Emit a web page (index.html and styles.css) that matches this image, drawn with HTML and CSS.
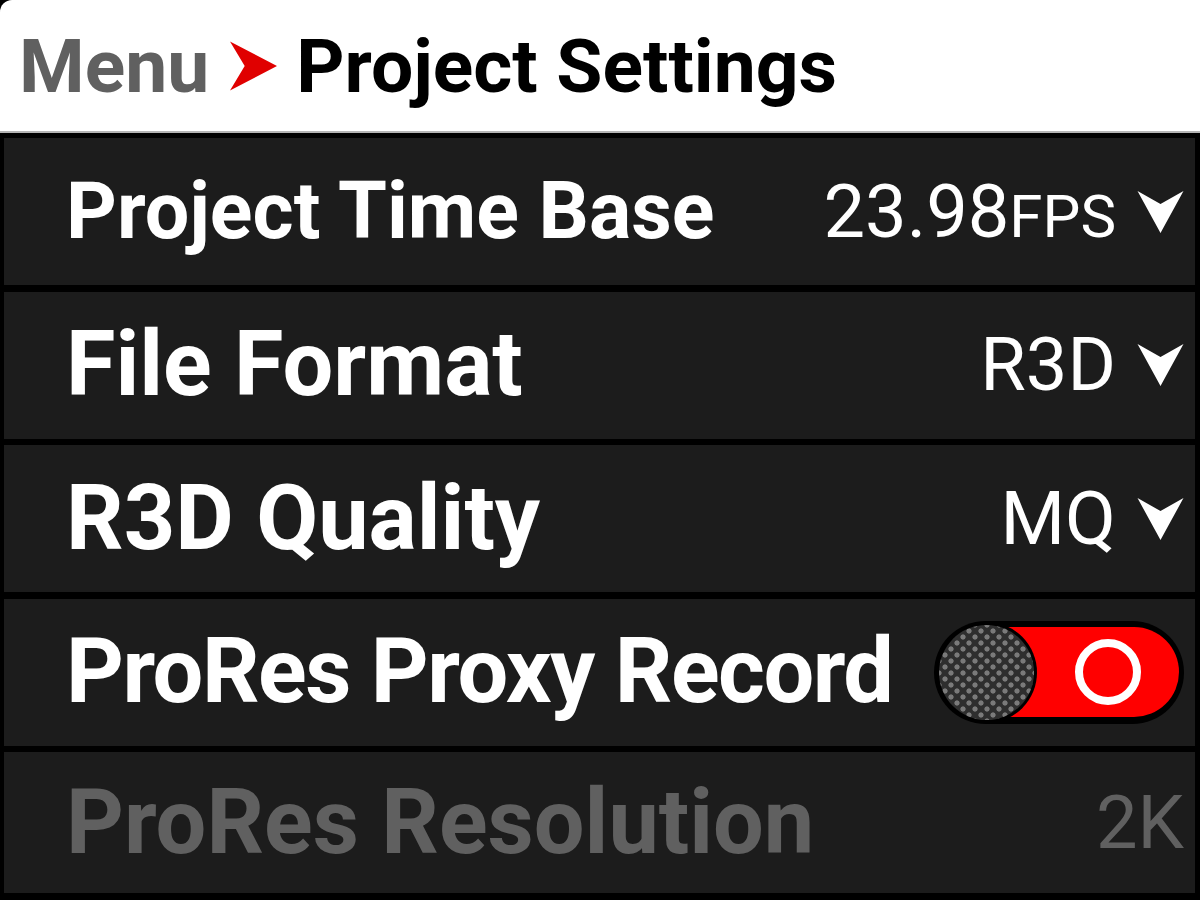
FILE: index.html
```html
<!DOCTYPE html>
<html>
<head>
<meta charset="utf-8">
<link rel="stylesheet" href="styles.css">
</head>
<body>
<div class="screen">
  <header class="header">
    <span class="crumb">Menu</span>
    <svg class="crumb-arrow" viewBox="0 0 48 50"><polygon points="0,0 48,25 0,50 15,25" fill="#e00000"/></svg>
    <span class="title">Project Settings</span>
  </header>
  <div class="list">
    <div class="row">
      <span class="label label-small">Project Time Base</span>
      <span class="value">23.98<span class="unit">FPS</span><svg class="chev" viewBox="0 0 46 44"><polygon points="0,1 23,14 46,1 23,43" fill="#fff"/></svg></span>
    </div>
    <div class="row">
      <span class="label">File Format</span>
      <span class="value">R3D<svg class="chev" viewBox="0 0 46 44"><polygon points="0,1 23,14 46,1 23,43" fill="#fff"/></svg></span>
    </div>
    <div class="row">
      <span class="label">R3D Quality</span>
      <span class="value">MQ<svg class="chev" viewBox="0 0 46 44"><polygon points="0,1 23,14 46,1 23,43" fill="#fff"/></svg></span>
    </div>
    <div class="row">
      <span class="label label-tight">ProRes Proxy Record</span>
      <span class="toggle">
        <span class="track"><span class="ring"></span></span>
        <span class="knob"></span>
      </span>
    </div>
    <div class="row row-disabled">
      <span class="label">ProRes Resolution</span>
      <span class="value value-plain">2K</span>
    </div>
  </div>
</div>
</body>
</html>
```

FILE: styles.css
```css
html, body {
  margin: 0;
  padding: 0;
  background: #000;
}
.screen {
  width: 1200px;
  height: 900px;
  overflow: hidden;
  background: #000;
  font-family: Roboto, "Liberation Sans", sans-serif;
}
.header {
  height: 133px;
  background: #fff;
  border-top-left-radius: 12px;
  border-bottom: 2px solid #b4b4b4;
  display: flex;
  align-items: center;
  padding-left: 19px;
  box-sizing: border-box;
}
.crumb {
  font-weight: 700;
  font-size: 75px;
  color: #606060;
  line-height: 1;
  margin-top: 2px;
}
.crumb-arrow {
  width: 47px;
  height: 50px;
  margin: 0 19px 0 21px;
}
.title {
  font-weight: 700;
  font-size: 75px;
  color: #000;
  line-height: 1;
  margin-top: 2px;
}
.list {
  margin-top: 5px;
  padding: 0 5px 0 4px;
  display: grid;
  grid-template-rows: repeat(4, 147px) 141px;
  row-gap: 6.5px;
}
.row {
  background: #1c1c1c;
  display: flex;
  align-items: center;
  justify-content: space-between;
  padding: 0 11px 0 62px;
}
.label {
  font-weight: 700;
  font-size: 90px;
  color: #fff;
  line-height: 1;
}
.label-small {
  font-size: 79px;
}
.label-tight {
  letter-spacing: -1.5px;
}
.value {
  display: flex;
  align-items: baseline;
  font-weight: 400;
  font-size: 74px;
  color: #fff;
  line-height: 1;
}
.unit {
  font-size: 60px;
}
.chev {
  width: 47px;
  height: 44px;
  margin-left: 21px;
  align-self: center;
}
.row-disabled .label,
.row-disabled .value {
  color: #606060;
}
.toggle {
  position: relative;
  width: 250px;
  height: 103px;
  background: #000;
  border-radius: 52px;
  margin-right: 0;
}
.track {
  position: absolute;
  left: 60px;
  top: 6px;
  right: 5px;
  bottom: 7px;
  background: #ff0000;
  border-radius: 0 46px 46px 0;
}
.ring {
  position: absolute;
  left: 81px;
  top: 12px;
  width: 50px;
  height: 50px;
  border: 8px solid #fff;
  border-radius: 50%;
}
.knob {
  position: absolute;
  left: 5px;
  top: 4px;
  width: 95px;
  height: 95px;
  border-radius: 50%;
  background-color: #2e2e2e;
  background-image: radial-gradient(circle, #7a7a7a 0 2.2px, transparent 3px),
                    radial-gradient(circle, #7a7a7a 0 2.2px, transparent 3px);
  background-size: 12px 12px;
  background-position: 0 0, 6px 6px;
  box-shadow: 0 0 0 3px #000;
}
```
